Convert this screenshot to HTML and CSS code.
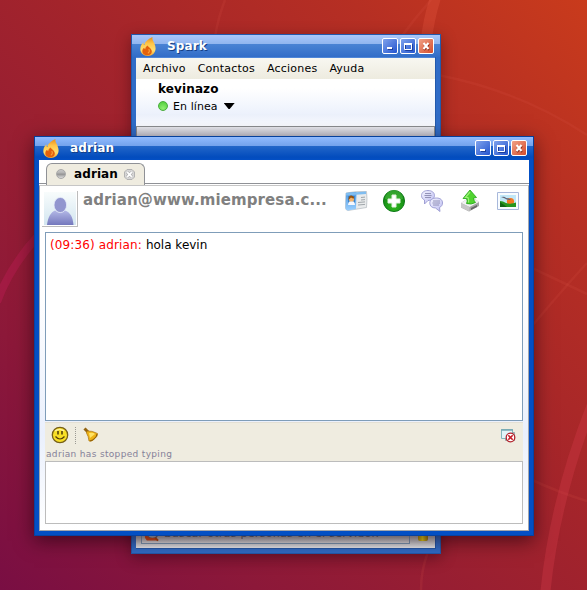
FILE: index.html
```
<!DOCTYPE html>
<html lang="es">
<head>
<meta charset="utf-8">
<title>Spark</title>
<link rel="stylesheet" href="styles.css">
</head>
<body>
<svg width="0" height="0" class="defs">
  <defs>
    <linearGradient id="flameOuter" x1="0" y1="0" x2="0" y2="1"><stop offset="0" stop-color="#e98a18"/><stop offset=".35" stop-color="#ffc64a"/><stop offset=".7" stop-color="#ffdf70"/><stop offset="1" stop-color="#f6a52c"/></linearGradient>
    <linearGradient id="avatarFill" x1="0" y1="0" x2="0" y2="1"><stop offset="0" stop-color="#b3b8e6"/><stop offset="1" stop-color="#7478bd"/></linearGradient>
    <linearGradient id="cardFill" x1="0" y1="0" x2="0" y2="1"><stop offset="0" stop-color="#4b97e0"/><stop offset="1" stop-color="#9bd0ff"/></linearGradient>
    <radialGradient id="greenBall" cx=".5" cy=".75" r=".75"><stop offset="0" stop-color="#2fb81f"/><stop offset="1" stop-color="#0e7d12"/></radialGradient>
    <linearGradient id="bubbleFill" x1="0" y1="0" x2="1" y2="1"><stop offset="0" stop-color="#f4f4ff"/><stop offset="1" stop-color="#bcbcf0"/></linearGradient>
    <symbol id="flame" viewBox="0 0 16 19">
      <path d="M12.500 0C11.600 3.500 15.600 6 15.600 11.500C15.600 16 12 19 8 19C3.500 19 .3 16 .3 12C.3 8.600 2.200 6.500 3.500 5.200C3.300 6.600 3.600 7.500 4.300 8C4.800 4.500 8.500 2 12.500 0Z" fill="url(#flameOuter)"/>
      <path d="M7.600 8.500C7.800 10 11.800 11.200 11.800 14.500C11.800 17 9.800 18.300 7.400 18.300C4.400 18.300 2.300 16.600 2.300 14.200C2.300 12.300 3.300 11.300 4.200 10.700C4.300 11.500 4.700 12 5.200 12.200C5.300 10.700 6.300 9.300 7.600 8.500Z" fill="#e4610c"/>
      <path d="M8.700 12.200C9.800 13.600 9.600 15.400 7.800 16.300" stroke="#f8a33a" stroke-width="1.100" fill="none"/>
    </symbol>
    <symbol id="minimize" viewBox="0 0 14 14"><path d="M5 10h5" stroke="#1c3f9c" stroke-width="2"/><path d="M4 9h5" stroke="#fff" stroke-width="2"/></symbol>
    <symbol id="maximize" viewBox="0 0 14 14"><path d="M4.500 5.500h7v6h-7z" stroke="#1c3f9c" fill="none"/><path d="M3.500 4.500h7v6h-7z" stroke="#fff" fill="none"/><path d="M3 5h8" stroke="#fff" stroke-width="2"/></symbol>
    <symbol id="close" viewBox="0 0 14 14"><path d="M5 5l5 6M10 5l-5 6" stroke="#8e2d1c" stroke-width="2"/><path d="M4.500 4l5 6M9.500 4l-5 6" stroke="#fff" stroke-width="2"/></symbol>
  </defs>
</svg>

<svg class="wallpaper" viewBox="0 0 587 590" fill="none">
  <g stroke="#df5a49" stroke-opacity=".15" stroke-width="2.500">
    <path d="M225 0Q218 18 215 37"/>
    <path d="M431 0Q415 18 402 36"/>
    <path d="M438 75Q520 91 587 135"/>
    <path d="M532 268L587 294"/>
    <path d="M532 326Q564 288 587 263"/>
    <path d="M530 479Q560 493 587 501"/>
    <path d="M428 552Q421 570 421 590"/>
  </g>
  <path d="M436 -4Q429 17 426 42" stroke="#ee6047" stroke-opacity=".25" stroke-width="11"/>
  <path d="M-3 302Q9 268 38 236" stroke="#bd1d53" stroke-opacity=".42" stroke-width="8"/>
  <path d="M545 596Q554 500 593 402" stroke="#d33a49" stroke-opacity=".36" stroke-width="10"/>
</svg>

<section class="window roster">
  <header class="titlebar">
    <svg class="app-icon"><use href="#flame"/></svg>
    <span class="caption caption-roster">Spark</span>
    <span class="controls">
      <svg class="control"><use href="#minimize"/></svg>
      <svg class="control"><use href="#maximize"/></svg>
      <svg class="control control-close"><use href="#close"/></svg>
    </span>
  </header>
  <div class="roster-body">
    <nav class="menu"><span>Archivo</span><span>Contactos</span><span>Acciones</span><span>Ayuda</span></nav>
    <div class="profile">
      <div class="nick">kevinazo</div>
      <div class="status"><i class="online"></i><span class="status-text">En línea</span><i class="arrow"></i></div>
    </div>
    <div class="contacts"></div>
    <div class="search-row">
      <div class="search">
        <svg class="search-icon" viewBox="0 0 16 16"><circle cx="9" cy="7" r="6" fill="#a9bac4" stroke="#66727c" stroke-width="1.500"/><path d="M1 8l5 4h6l3 3H3L1 12z" fill="#d9501d"/><path d="M12 12l3 3" stroke="#b84c12" stroke-width="2"/></svg>
        <span class="search-text">Buscar otras personas en el servidor.</span>
      </div>
      <i class="search-badge"></i>
    </div>
  </div>
</section>

<section class="window chat">
  <header class="titlebar">
    <svg class="app-icon"><use href="#flame"/></svg>
    <span class="caption caption-chat">adrian</span>
    <span class="controls">
      <svg class="control"><use href="#minimize"/></svg>
      <svg class="control"><use href="#maximize"/></svg>
      <svg class="control control-close"><use href="#close"/></svg>
    </span>
  </header>
  <div class="chat-body">
    <div class="tabs">
      <div class="tab">
        <i class="offline"></i>
        <span class="tab-name">adrian</span>
        <svg class="tab-close" viewBox="0 0 11 11"><path d="M3 .5h5L10.500 3v5L8 10.500H3L.5 8V3z" fill="#d6d6d6" stroke="#b2b2b2"/><path d="M3.200 3.200l4.600 4.600M7.800 3.200L3.200 7.800" stroke="#a8a8a8" stroke-width="3"/><path d="M3.200 3.200l4.600 4.600M7.800 3.200L3.200 7.800" stroke="#fff" stroke-width="1.800"/></svg>
      </div>
    </div>
    <div class="pane">
      <div class="contact">
        <div class="avatar">
          <svg viewBox="0 0 32 33" width="32" height="33"><path d="M3 33C4 25 7 20 11 18.500Q16 22.500 21 18.500C26 20 29 25 29.500 33Z" fill="url(#avatarFill)"/><ellipse cx="16.300" cy="13" rx="6.300" ry="7.600" fill="#9296cf" stroke="#e4eafa" stroke-width=".8"/></svg>
        </div>
        <span class="jid">adrian@www.miempresa.c...</span>
        <div class="actions">
          <svg viewBox="0 0 24 24" width="24" height="24">
            <path d="M2 4Q12 2 22.500 2.500Q23.500 9 22.500 18.500L4 21.500Q1.500 21 1.500 19Z" fill="#e9ebec" stroke="#b1b9bf" stroke-width=".7"/>
            <path d="M2 4L12.500 3L12 20L4 21.500Q1.500 21 1.500 19Z" fill="url(#cardFill)"/>
            <path d="M2 4L22 2.600V5L2 6.500Z" fill="#80bdf0"/>
            <path d="M4 7h7v9H4z" fill="#3b83cb"/><path d="M4 16q0-4 3.500-4t3.500 4z" fill="#f5f8ff"/><circle cx="7.500" cy="10" r="2.600" fill="#f2b36d"/><path d="M4.500 11q0-5 3-4.500t2.500 3q-2 0-3-1z" fill="#96510e"/>
            <path d="M17 8.500l4-.4M17 11l4-.4M14 13.500l7-.6M14 16l7-.6" stroke="#a0a6aa"/>
          </svg>
          <svg viewBox="0 0 24 24" width="24" height="24">
            <circle cx="12" cy="12" r="10.600" fill="url(#greenBall)" stroke="#087513" stroke-width=".9"/><path d="M3 10a9 9 0 0 1 18 0Q12 12 3 10z" fill="#58c74b" opacity=".45"/>
            <path d="M10 6h4v4h4v4h-4v4h-4v-4H6v-4h4z" fill="#fff" stroke="#e3f1df"/>
          </svg>
          <svg viewBox="0 0 24 24" width="24" height="24" fill="url(#bubbleFill)" stroke="#9999d0" stroke-width=".9">
            <path d="M8 1.500C12 1.500 14.500 3.700 14.500 6.500C14.500 9.500 11.500 11.500 8 11.500L4.500 15V11C2.500 10 1.500 8.500 1.500 6.500C1.500 3.700 4 1.500 8 1.500Z"/>
            <path d="M16.500 9C20.500 9 22.500 11 22.500 14C22.500 16 21.500 17.500 19.500 18.500L20 22.500L15.500 19C12 19 9.800 17 9.800 14C9.800 11 12.500 9 16.500 9Z"/>
            <path d="M5 4.500h6M4.500 6.500h7M5 8.500h6M13 12h7M12.500 14h7.500M13 16h6" stroke="#8b8bb0"/>
          </svg>
          <svg viewBox="0 0 24 24" width="24" height="24">
            <path d="M3 14L9 10H17L21 13V17L11 22.500L3 18.500Z" fill="#a6a6a6"/><path d="M3 14L9 10H17L21 13L11.500 18Z" fill="#f1f1f1"/><path d="M3 14L11.500 18V22.500L3 18.500Z" fill="#c7c7c7"/><path d="M13 19l6-3v2l-6 3z" fill="#666"/>
            <path d="M8.500 14.500Q10 12 8.500 9.500L5 9.500L12 1L18.500 8.500L15.500 9Q16 12 17.500 13.500Q13 16 8.500 14.500Z" fill="#51d430" stroke="#22a317" stroke-width=".8"/><path d="M12 3L7.500 8.500L10 8.500Q11 11 10.500 13.500" stroke="#9cf276" fill="none" stroke-width="1.200"/>
          </svg>
          <svg viewBox="0 0 24 24" width="24" height="24">
            <path d="M1.500 3.500h21v17h-21z" fill="#f8fcff" stroke="#a8b8db"/><path d="M4 6h16v12H4z" fill="#c1e7f7"/><circle cx="14.500" cy="12.500" r="3.600" fill="#f57820"/>
            <path d="M4 12q3 0 6 2q5 1.500 10-.5V18H4z" fill="#26961e"/><path d="M4 13l7 5H4z" fill="#126314"/><path d="M5 8q4-1 5 1q4 0 5 2q-5 0-6-1.500z" fill="#667"/>
          </svg>
        </div>
      </div>
      <div class="transcript"><span class="stamp">(09:36) adrian: </span><span>hola kevin</span></div>
      <div class="compose">
        <div class="tools">
          <svg viewBox="0 0 18 18" width="18" height="18"><circle cx="9" cy="9" r="7.700" fill="#f8df25" stroke="#765f19" stroke-width="1.300"/><path d="M4 5a6.500 6 0 0 1 9 0" stroke="#fff49b" stroke-width="1.300" fill="none"/><path d="M7 5v3.500M11 5v3.500" stroke="#4b3909" stroke-width="1.500"/><path d="M4.500 10.500Q9 15.500 13.500 10.500" stroke="#574009" stroke-width="1.200" fill="none"/></svg>
          <i class="divider"></i>
          <svg class="bell" viewBox="0 0 16 16" width="16" height="16"><path d="M1.500 1.500L5 5" stroke="#946411" stroke-width="3"/><path d="M4 4Q9 3.500 14.500 6.500Q15 9 12 11.500Q9 15 6 14Q5.500 9 3.500 6Z" fill="#eeb316" stroke="#a7710b" stroke-width=".7"/><path d="M6 6q4-1 6 1l-5 4z" fill="#ffe365"/><path d="M14 7q-1 5-7 7" stroke="#8c5b06" fill="none"/></svg>
          <svg class="clear" viewBox="0 0 16 16" width="16" height="16"><path d="M5.500 4.500h9v8h-9z" fill="#b3bfc3" stroke="#9fa9ad"/><path d="M1.500 1.500h11v9h-11z" fill="#e2f5f8" stroke="#84b7bd"/><path d="M1 2h12" stroke="#76a7b2" stroke-width="1.500"/><circle cx="10.500" cy="9.500" r="4.300" fill="#fff" stroke="#b3222c" stroke-width="1.300"/><path d="M8.300 7.300l4.400 4.400M12.700 7.300l-4.400 4.400" stroke="#c81e28" stroke-width="1.600"/></svg>
        </div>
        <div class="typing">adrian has stopped typing</div>
      </div>
      <div class="input"></div>
    </div>
  </div>
</section>
</body>
</html>
```
FILE: styles.css
```
* { box-sizing: border-box; }
body {
  margin: 0;
  width: 587px;
  height: 590px;
  overflow: hidden;
  position: relative;
  font-family: "DejaVu Sans", sans-serif;
  font-size: 11px;
  color: #000;
  background: linear-gradient(45deg, #790e43 0%, #8c1839 22%, #a3242b 55%, #b62f23 80%, #c93b1c 100%);
}
svg, i { display: block; flex: none; }
.defs { position: absolute; }
.wallpaper { position: absolute; inset: 0; width: 587px; height: 590px; }

.window { position: absolute; display: flex; flex-direction: column; padding: 0 5px 5px; }
.roster {
  left: 131px; top: 34px; width: 310px; height: 520px;
  background: #306cc7;
  box-shadow: inset 0 0 0 1px #2359ab, 0 4px 14px rgba(30, 0, 10, .4);
}
.chat {
  left: 34px; top: 136px; width: 500px; height: 400px;
  background: #034fc4;
  box-shadow: inset 0 0 0 1px #0742a0, 0 5px 18px rgba(25, 0, 10, .6);
}
.titlebar { display: flex; margin: 0 -5px; padding: 0 6px 0 8px; flex: none; }
.roster .titlebar {
  height: 23px; border: 1px solid #2359ab; border-bottom: 0;
  background: linear-gradient(#a9c7fb 0, #91b5ee 9px, #4a83d4 9px, #326dc8 100%);
}
.chat .titlebar {
  height: 24px; border: 1px solid #06409c; border-bottom: 0;
  background: linear-gradient(#91bbff 0, #73a2ec 9px, #2367c9 9px, #034cbd 20px, #034fc4 100%);
}
.app-icon { width: 16px; height: 19px; margin-top: 2px; }
.caption { color: #fff; font-weight: bold; font-size: 12px; line-height: 14px; margin-top: 4px; letter-spacing: .15px; text-shadow: 1px 1px #163f85; }
.caption-roster { margin-left: 11px; }
.caption-chat { margin-left: 11px; }
.controls { display: flex; gap: 2px; margin-left: auto; margin-top: 3px; }
.control { width: 16px; height: 16px; border: 1px solid #fff; border-radius: 2px; background: linear-gradient(135deg, #7fa2ec, #2455cf); }
.control-close { background: linear-gradient(135deg, #f0a187, #d64d2c); }

.roster-body { flex: 1; display: flex; flex-direction: column; background: #fff; border: 1px solid #2359ab; border-width: 0 1px 1px 0; }
.menu { display: flex; gap: 12px; height: 22px; padding: 4px 7px 0; line-height: 13px; letter-spacing: .22px; background: linear-gradient(#f8f7f1, #edebdf); border-top: 1px solid #4f86d8; }
.profile { height: 47px; padding: 3px 0 0 22px; background: linear-gradient(#fff 20%, #ecf1fc 75%, #f9faff); }
.nick { font-size: 12px; line-height: 14px; font-weight: bold; letter-spacing: .12px; }
.status { display: flex; align-items: center; height: 20px; }
.online { width: 10px; height: 10px; border: 1px solid #48ad3c; border-radius: 50%; background: radial-gradient(circle at 50% 80%, #91ef73, #4acb36); }
.status-text { margin-left: 5px; letter-spacing: .08px; }
.arrow { margin-left: 6px; width: 11px; height: 6px; background: #000; clip-path: polygon(0 0, 100% 0, 55% 100%, 45% 100%); }
.contacts { flex: 1; border: 1px solid #8b8c90; border-bottom: 0; background: linear-gradient(#e7e7ed, #bfc1ce 12px, #fff 40px); }
.search-row { display: flex; height: 25px; padding-left: 5px; background: linear-gradient(#a7a7a9 0, #a7a7a9 10px, #eceef2 100%); }
.search { display: flex; width: 269px; height: 21px; border: 1px solid #7f9db9; background: linear-gradient(#a0a2a5 50%, #e3e4e7); align-items: center; padding-left: 2px; }
.search-icon { width: 15px; height: 16px; }
.search-text { color: #69696c; margin-left: 5px; letter-spacing: .3px; white-space: nowrap; }
.search-badge { margin: 5px 0 0 8px; width: 10px; height: 13px; border-radius: 2px; background: linear-gradient(90deg, #b89a13, #f1dc17 45%, #a27d0e); }

.chat-body { flex: 1; display: flex; flex-direction: column; background: #fff; }
.tabs { height: 24px; padding: 3px 7px 0; border-bottom: 1px solid #8f9196; }
.tab { display: flex; align-items: center; width: 99px; height: 22px; padding: 0 0 1px 9px; border: 1px solid #8f9196; border-bottom: 0; border-radius: 6px 6px 0 0; background: #efece0; }
.offline { width: 10px; height: 10px; border: 1px solid #a9a9a9; border-radius: 50%; background: linear-gradient(#c9c9c9, #b0b0b0 40%, #8f8f8f 50%, #dedede); }
.tab-name { margin-left: 8px; font-size: 12px; font-weight: bold; letter-spacing: .1px; }
.tab-close { width: 11px; height: 11px; margin-left: 6px; }
.pane { flex: 1; margin-top: 1px; padding: 0 5px; display: flex; flex-direction: column; border: 1px solid #a4a7ad; border-top-color: #c6c6c6; background: linear-gradient(#fff 30%, #eaf0fd 72%, #fff); }
.contact { display: flex; height: 46px; margin: 0 -5px; padding-left: 2px; background: #fff; }
.avatar { width: 36px; height: 36px; margin-top: 5px; padding: 1px 1px 1px 2px; border: 1px solid #bcbcbc; border-width: 0 1px 1px 0; background: #fff; }
.avatar svg { background: linear-gradient(#f8fcfc, #d3e6f0); }
.jid { margin: 6px 0 0 5px; font-size: 15px; line-height: 17px; font-weight: bold; letter-spacing: .11px; color: #808080; width: 246px; white-space: nowrap; }
.actions { display: flex; gap: 14px; margin: 3px 0 0 15px; }
.transcript { height: 189px; border: 1px solid #7f9db9; background: #fff; padding: 5px 4px; font-size: 12px; line-height: 14px; white-space: pre; }
.stamp { color: #f00; letter-spacing: .13px; }
.compose { height: 40px; margin-top: 1px; border-top: 1px solid #e4e0d4; background: #efece0; }
.tools { display: flex; height: 25px; padding: 3px 7px 0 6px; }
.divider { width: 1px; height: 17px; margin: 1px 7px 0 6px; border-left: 1px dotted #9b9a94; }
.bell { margin-top: 1px; }
.clear { margin-left: auto; margin-top: 2px; }
.typing { font-size: 9px; line-height: 12px; margin-left: 1px; letter-spacing: .33px; color: #858199; }
.input { height: 63px; margin-top: -1px; border: 1px solid #bcbcbc; background: #fff; }
```
